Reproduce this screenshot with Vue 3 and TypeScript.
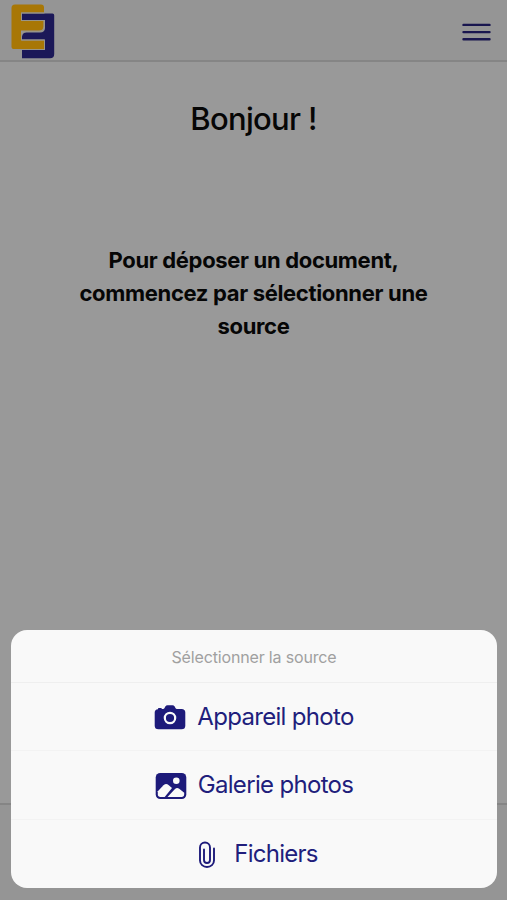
<script setup lang="ts">
type IconName = 'camera' | 'image' | 'attach'

interface Source {
  label: string
  icon: IconName
}

const sources: Source[] = [
  { label: 'Appareil photo', icon: 'camera' },
  { label: 'Galerie photos', icon: 'image' },
  { label: 'Fichiers', icon: 'attach' },
]
</script>

<template>
  <div class="screen">
    <header class="header">
      <svg class="logo" viewBox="0 0 44 56" aria-hidden="true">
        <path class="logo-gold" d="M4 0.500H30Q33 0.500 33 3.500V8.500H10V17H32.500V22Q32.500 26.500 28 26.500H10V36.500H33V45H2.500Q0.500 45 0.500 43V4Q0.500 0.500 4 0.500Z" />
        <path class="logo-blue" d="M11 9.500H41.500Q43.200 9.500 43.200 11.200V50Q43.200 54.300 39 54.300H11V46H34V35.500H11V33Q11 28.500 15.500 28.500H29Q34 28.500 34 23.500V16H11Z" />
        <path class="logo-gap" d="M33.500 9H10.500V16.500H33.300V22.500Q33.300 27.500 28.500 27.500H15Q10.500 28 10.500 32.500V36H33.500V45.500H10.500" />
      </svg>
      <button class="menu" aria-label="Menu">
        <svg viewBox="0 0 29 18" aria-hidden="true">
          <path d="M1.500 1.900H27.500M1.500 9.100H27.500M1.500 16.300H27.500" />
        </svg>
      </button>
    </header>

    <main class="content">
      <h1>Bonjour !</h1>
      <p>Pour déposer un document,<br />commencez par sélectionner une<br />source</p>
    </main>

    <footer class="footer"></footer>

    <section class="sheet">
      <div class="sheet-title"><span>Sélectionner la source</span></div>
      <button v-for="source in sources" :key="source.icon" class="source" :class="source.icon">
        <svg v-if="source.icon === 'camera'" class="icon" viewBox="0 0 32 28" aria-hidden="true">
          <path fill="currentColor" d="M4 5.200V4.800Q4 4 4.800 4H7Q7.800 4 7.800 4.800V5H9.200Q9.900 5 10.400 4.200L11.300 2.600Q12.200 1.200 13.500 1.200H18.500Q19.800 1.200 20.700 2.600L21.600 4.200Q22.100 5 22.800 5H27.500Q31.300 5 31.300 8.500V21.700Q31.300 25.200 27.500 25.200H4.500Q0.700 25.200 0.700 21.700V8.500Q0.700 5.600 4 5.200Z" />
          <circle cx="16" cy="14" r="5.200" fill="none" stroke="#f9f9f9" stroke-width="2.200" />
        </svg>
        <svg v-else-if="source.icon === 'image'" class="icon" viewBox="0 0 32 28" aria-hidden="true">
          <rect x="0.700" y="1" width="30.600" height="26" rx="4.500" fill="currentColor" />
          <circle cx="21.300" cy="8.800" r="3.300" fill="#f9f9f9" />
          <path fill="#f9f9f9" d="M2.800 19.300L8.500 13.300Q11 10.800 13.500 12.900L17 16L9.700 24.900H5.500Q2.800 24.900 2.800 22.200Z" />
          <path fill="#f9f9f9" d="M12.500 24.900L20 17.100Q22 15 24.200 16.800L29.200 20.800V22.200Q29.200 24.900 26.500 24.900Z" />
        </svg>
        <svg v-else class="icon" viewBox="0 0 18 28" aria-hidden="true">
          <path fill="none" stroke="currentColor" stroke-width="1.900" stroke-linecap="round" d="M16 7.500V19.500A7 6.500 0 0 1 2 19.500V6.500A5 5 0 0 1 12 6.500V19A3 3 0 0 1 6 19V8.500" />
        </svg>
        <span class="label">{{ source.label }}</span>
      </button>
    </section>
  </div>
</template>

<style>
body {
  margin: 0;
}
</style>

<style scoped>
.screen {
  position: relative;
  display: flex;
  flex-direction: column;
  width: 100%;
  height: 900px;
  overflow: hidden;
  background: #999;
  color: #060606;
  font-family: Inter, 'Liberation Sans', sans-serif;
}

button {
  margin: 0;
  padding: 0;
  border: 0;
  background: none;
  font: inherit;
}

.header {
  display: flex;
  justify-content: space-between;
  align-items: flex-start;
  box-sizing: border-box;
  height: 62px;
  padding: 4px 16px 0 11px;
  background: #959595;
  border-bottom: 2px solid #858585;
}

.logo {
  width: 44px;
  height: 56px;
}

.logo-blue {
  fill: #1b1858;
}

.logo-gold {
  fill: #a87706;
}

.logo-gap {
  fill: none;
  stroke: #999588;
  stroke-width: 1;
}

.menu {
  display: flex;
  padding-top: 19px;
}

.menu svg {
  width: 29px;
  height: 18px;
  fill: none;
  stroke: #19164f;
  stroke-width: 2.400;
  stroke-linecap: round;
}

.content {
  flex: 1;
  text-align: center;
}

h1 {
  margin: 37px 0 0;
  font-size: 31px;
  line-height: 40px;
  font-weight: 450;
  letter-spacing: -0.700px;
}

p {
  margin: 105px 0 0;
  font-size: 22px;
  line-height: 33px;
  font-weight: 650;
  letter-spacing: -0.330px;
}

.footer {
  box-sizing: border-box;
  height: 97px;
  border-top: 2px solid #858585;
  background: #959595;
}

.sheet {
  position: absolute;
  left: 11px;
  right: 10px;
  bottom: 12px;
  height: 258px;
  display: flex;
  flex-direction: column;
  overflow: hidden;
  border-radius: 16px;
  background: #f9f9f9;
}

.sheet-title {
  display: flex;
  justify-content: center;
  align-items: center;
  box-sizing: border-box;
  height: 53px;
  padding-top: 3px;
  border-bottom: 1px solid #efefef;
  color: #a0a0a0;
  font-size: 16px;
  letter-spacing: -0.160px;
}

.source {
  display: flex;
  justify-content: center;
  align-items: center;
  box-sizing: border-box;
  height: 68.500px;
  padding-top: 2px;
  border-bottom: 1px solid #f3f3f3;
  color: #211e7c;
  font-size: 24px;
  letter-spacing: -0.680px;
}

.source:last-child {
  border-bottom: 0;
}

.label {
  padding-bottom: 3px;
}

.icon {
  flex: none;
  width: 32px;
  height: 28px;
  margin-right: 11px;
  color: #1d1a7a;
}

.attach {
  padding-left: 8px;
}

.attach .icon {
  width: 18px;
  margin-right: 18px;
}

.attach .label {
  letter-spacing: -0.750px;
}
</style>
